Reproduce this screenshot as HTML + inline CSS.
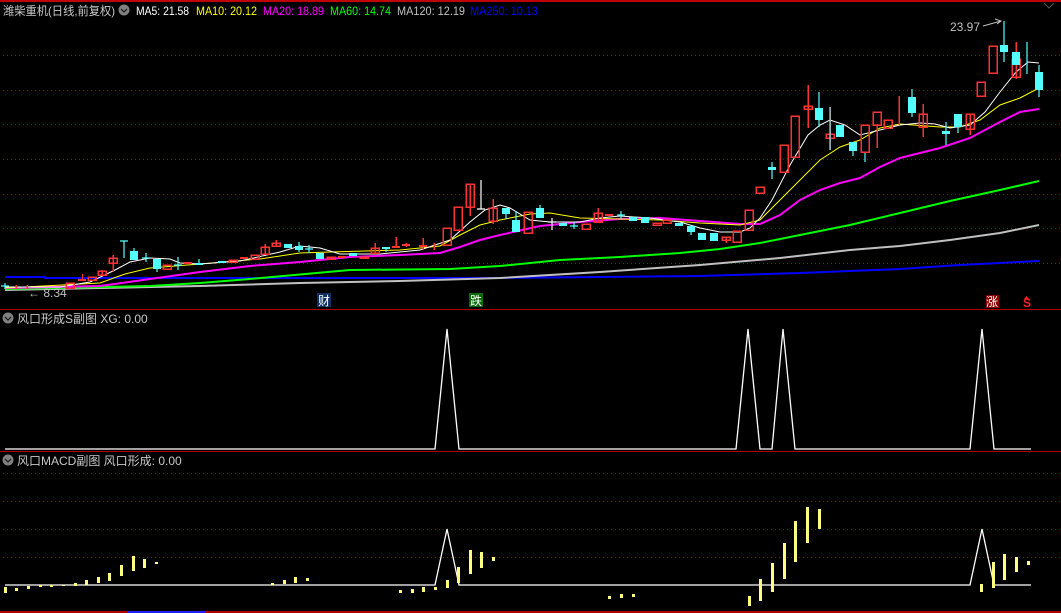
<!DOCTYPE html>
<html><head><meta charset="utf-8"><style>
html,body{margin:0;padding:0;background:#000;width:1061px;height:613px;overflow:hidden}
svg{display:block}
text{font-family:"Liberation Sans","Noto Sans CJK SC",sans-serif;font-size:12px}
</style></head><body>
<svg width="1061" height="613" viewBox="0 0 1061 613" xmlns="http://www.w3.org/2000/svg">
<rect x="0" y="0" width="1061" height="2" fill="#c00000"/>
<!-- header -->
<text x="3" y="15" fill="#c8c8c8" textLength="112" lengthAdjust="spacingAndGlyphs">潍柴重机(日线,前复权)</text>
<circle cx="124" cy="10" r="5.5" fill="#808080"/><path d="M121 9l3 3 3-3" stroke="#222" stroke-width="1.3" fill="none"/>
<text x="136" y="15" fill="#ffffff" textLength="53" lengthAdjust="spacingAndGlyphs">MA5: 21.58</text>
<text x="196" y="15" fill="#ffff00" textLength="61" lengthAdjust="spacingAndGlyphs">MA10: 20.12</text>
<text x="263" y="15" fill="#ff00ff" textLength="61" lengthAdjust="spacingAndGlyphs">MA20: 18.89</text>
<text x="330" y="15" fill="#00ff00" textLength="61" lengthAdjust="spacingAndGlyphs">MA60: 14.74</text>
<text x="397" y="15" fill="#c0c0c0" textLength="68" lengthAdjust="spacingAndGlyphs">MA120: 12.19</text>
<text x="470" y="15" fill="#0000ff" textLength="68" lengthAdjust="spacingAndGlyphs">MA250: 10.13</text>
<path d="M1044 3l5 5 5-5" stroke="#555" fill="none"/>
<!-- grid -->
<g stroke="#a00000" stroke-dasharray="1 3" stroke-width="1">
<path d="M3 55.5H1061M3 90.5H1061M3 124.5H1061M3 159.5H1061M3 194.5H1061M3 228.5H1061M3 263.5H1061"/>
<path d="M3 473.5H1061M3 501.5H1061M3 529.5H1061M3 557.5H1061"/>
</g>
<rect x="0" y="309" width="1061" height="1" fill="#b00000"/>
<rect x="0" y="451" width="1061" height="1" fill="#b00000"/>
<rect x="0" y="611" width="1061" height="2" fill="#b00000"/>
<rect x="127" y="611" width="78" height="2" fill="#2020ff"/>
<!-- MA lines -->
<g fill="none" stroke-width="1">
<polyline stroke="#0000ff" stroke-width="2" points="5,277 45,277 45,278 500,278 700,276 800,273 900,269 960,265 1039,261"/>
<polyline stroke="#c0c0c0" stroke-width="2" points="5,290 100,288 200,286 300,283 400,281 500,278 600,272 700,265 780,258 850,250 900,246 950,240 1000,233 1039,225"/>
<polyline stroke="#00ff00" stroke-width="2" points="5,289 150,286 200,283 250,279 350,270 450,269 500,266 560,260 620,257 680,253 720,249 760,243 800,235 850,225 900,213 950,201 1000,190 1039,181"/>
<polyline stroke="#ff00ff" stroke-width="2" points="5,288 100,286 150,279 200,272 250,266 300,262 350,257 400,255 440,253 460,247 480,240 500,235 540,226 580,222 620,219 660,218 700,221 740,224 760,224 780,215 800,200 820,190 840,183 860,178 880,167 900,158 940,148 970,138 1000,122 1020,112 1039,109"/>
<polyline stroke="#ffff00" points="5,288 100,283 125,274 150,268 200,264 260,259 300,253 330,252 400,250 440,246 460,235 480,225 500,220 530,214 550,213 580,218 620,219 660,220 700,223 740,225 760,220 780,200 800,180 820,160 840,147 860,140 880,128 900,124 940,127 960,127 980,120 1000,105 1020,98 1039,88"/>
<polyline stroke="#ffffff" points="5,287 60,287 90,282 115,270 130,262 150,258 170,259 180,263 200,264 240,261 280,252 300,246 320,248 340,254 380,254 420,250 450,240 470,222 485,210 500,205 510,208 530,220 550,222 580,222 600,218 620,216 650,218 680,222 700,228 720,232 740,232 750,228 760,218 772,200 790,165 808,135 820,125 830,120 845,125 860,135 880,130 900,125 920,123 935,124 950,128 970,125 985,112 1000,92 1016,72 1028,62 1039,63"/>
</g>
<!-- candles: red hollow -->
<g stroke="#ff3232" fill="none" stroke-width="1.5" shape-rendering="crispEdges">
<path d="M16 285v4M27 285v4M102 270v6M113 255v17M265 244v10M276 240v6M375 243v10M396 237v10M406 243v4M423 238v12M434 243v7M470 184v32M493 199v25M598 208v14M726 237v6M808 85v43M830 107v43M877 124v24M899 96v29M923 104v33M970 114v21M1016 42v37"/>
<rect x="66" y="283" width="8" height="5"/><rect x="88" y="277" width="8" height="3"/><rect x="98" y="271" width="8" height="4"/>
<rect x="109" y="258" width="8" height="5"/><rect x="163" y="265" width="8" height="4"/><rect x="229" y="260" width="8" height="2"/><rect x="251" y="255" width="8" height="4"/><rect x="261" y="247" width="8" height="7"/><rect x="272" y="243" width="8" height="3"/><rect x="327" y="257" width="8" height="2"/><rect x="360" y="257" width="8" height="1"/><rect x="371" y="248" width="8" height="5"/>
<rect x="443" y="228" width="8" height="17"/><rect x="454" y="207" width="8" height="23"/><rect x="466" y="184" width="8" height="23"/><rect x="489" y="208" width="8" height="13"/><rect x="524" y="212" width="8" height="21"/><rect x="582" y="224" width="8" height="5"/><rect x="594" y="213" width="8" height="9"/><rect x="653" y="223" width="8" height="2"/><rect x="663" y="220" width="8" height="3"/><rect x="722" y="237" width="8" height="3"/><rect x="733" y="231" width="8" height="11"/><rect x="745" y="210" width="8" height="20"/><rect x="756" y="187" width="8" height="6"/>
<rect x="780" y="145" width="8" height="27"/><rect x="791" y="116" width="8" height="41"/><rect x="804" y="106" width="8" height="3"/><rect x="826" y="134" width="8" height="4"/><rect x="861" y="125" width="8" height="27"/><rect x="873" y="112" width="8" height="13"/><rect x="884" y="120" width="8" height="8"/><rect x="919" y="114" width="8" height="13"/><rect x="966" y="114" width="8" height="15"/><rect x="977" y="82" width="8" height="14"/><rect x="989" y="46" width="8" height="27"/><rect x="1012" y="59" width="8" height="18"/>
</g>
<g fill="#ff3232"><rect x="78" y="279" width="8" height="2"/><rect x="184" y="262" width="8" height="2"/><rect x="240" y="257" width="8" height="2"/><rect x="338" y="256" width="8" height="2"/><rect x="392" y="246" width="8" height="2"/><rect x="402" y="244" width="8" height="2"/><rect x="419" y="245" width="8" height="2"/><rect x="605" y="214" width="8" height="2"/><rect x="82" y="274" width="1" height="5"/></g>
<!-- cyan -->
<g stroke="#54ffff" stroke-width="1.2"><path d="M1 286h8M5 283v6M124 241v17M120 241h8M134 248v4M146 253v9M142 258h8M157 268v4M178 257v13M174 265h8M199 259v6M309 245v8M305 249h8M299 242v10M386 247v5M506 214v5M516 211v9M540 205v4M574 222v7M570 226h8M621 211v8M617 215h8M691 232v3M772 162v17M819 92v35M830 107v43M853 150v6M865 153v9M912 89v28M946 122v23M958 120v13M954 125h8M1004 21v41M1027 42v32M1039 65v32"/></g>
<g fill="#54ffff"><rect x="130" y="251" width="8" height="9"/><rect x="153" y="259" width="8" height="10"/><rect x="195" y="263" width="8" height="2"/><rect x="218" y="261" width="8" height="2"/><rect x="284" y="244" width="8" height="4"/><rect x="295" y="246" width="8" height="4"/><rect x="316" y="253" width="8" height="6"/><rect x="349" y="253" width="8" height="3"/><rect x="382" y="247" width="8" height="2"/><rect x="502" y="208" width="8" height="6"/><rect x="512" y="220" width="8" height="12"/><rect x="536" y="208" width="8" height="10"/><rect x="559" y="223" width="8" height="3"/><rect x="629" y="217" width="8" height="4"/><rect x="641" y="217" width="8" height="6"/><rect x="675" y="223" width="8" height="3"/><rect x="687" y="226" width="8" height="6"/><rect x="698" y="233" width="8" height="7"/><rect x="710" y="233" width="8" height="8"/><rect x="768" y="167" width="8" height="3"/><rect x="815" y="108" width="8" height="12"/><rect x="836" y="125" width="8" height="12"/><rect x="849" y="142" width="8" height="9"/><rect x="908" y="97" width="8" height="16"/><rect x="942" y="131" width="8" height="3"/><rect x="954" y="114" width="8" height="13"/><rect x="1000" y="45" width="8" height="7"/><rect x="1012" y="52" width="8" height="13"/><rect x="1035" y="72" width="8" height="18"/></g>
<g stroke="#fff" stroke-width="1.2"><path d="M481 180v29M477 209h8M552 218v12M548 222h8"/></g>
<!-- labels -->
<text x="28" y="297" fill="#c0c0c0">← 8.34</text>
<text x="950" y="31" fill="#c0c0c0">23.97</text>
<path d="M983 26l18-5M995 19l6 2-4 3" stroke="#c0c0c0" fill="none"/>
<rect x="317" y="293" width="14" height="14" fill="#103060"/><text x="318" y="305" fill="#fff">财</text>
<rect x="469" y="293" width="14" height="14" fill="#0a6a0a"/><text x="470" y="305" fill="#fff">跌</text>
<rect x="986" y="295" width="13" height="13" fill="#8a0000"/><text x="986" y="306" fill="#fff">涨</text>
<text x="1023" y="307" fill="#ff2020" font-weight="bold">S</text><path d="M1024 299l2.5-3 2.5 3z" fill="#ff2020"/>
<!-- sub panel 1 -->
<circle cx="8" cy="318" r="5.5" fill="#808080"/><path d="M5 317l3 3 3-3" stroke="#222" stroke-width="1.3" fill="none"/>
<text x="17" y="323" fill="#c8c8c8">风口形成S副图  XG: 0.00</text>
<polyline fill="none" stroke="#fff" stroke-width="1.3" points="5,449 435,449 447,329 459,449 736,449 748,329 760,449 772,449 783,329 795,449 970,449 982,329 994,449 1031,449"/>
<!-- sub panel 2 -->
<circle cx="8" cy="460" r="5.5" fill="#808080"/><path d="M5 459l3 3 3-3" stroke="#222" stroke-width="1.3" fill="none"/>
<text x="17" y="465" fill="#c8c8c8">风口MACD副图  风口形成: 0.00</text>
<polyline fill="none" stroke="#fff" stroke-width="1.3" points="5,585 435,585 447,529 459,585 970,585 982,529 994,585 1031,585"/>
<g fill="#ffff80">
<rect x="4" y="587" width="3" height="6"/><rect x="15" y="588" width="3" height="3"/><rect x="27" y="586" width="3" height="3"/><rect x="39" y="585" width="3" height="2"/><rect x="50" y="585" width="3" height="2"/><rect x="62" y="585" width="3" height="1"/><rect x="74" y="583" width="3" height="3"/><rect x="85" y="580" width="3" height="5"/><rect x="97" y="577" width="3" height="6"/><rect x="108" y="573" width="3" height="8"/><rect x="120" y="565" width="3" height="11"/><rect x="132" y="556" width="3" height="15"/><rect x="143" y="559" width="3" height="9"/><rect x="155" y="562" width="3" height="2"/>
<rect x="271" y="583" width="3" height="2"/><rect x="283" y="580" width="3" height="4"/><rect x="294" y="577" width="3" height="6"/><rect x="306" y="578" width="3" height="3"/>
<rect x="399" y="590" width="3" height="3"/><rect x="411" y="589" width="3" height="4"/><rect x="422" y="587" width="3" height="5"/><rect x="434" y="587" width="3" height="3"/><rect x="446" y="580" width="3" height="8"/><rect x="457" y="567" width="3" height="16"/><rect x="469" y="550" width="3" height="24"/><rect x="480" y="552" width="3" height="16"/><rect x="492" y="557" width="3" height="4"/>
<rect x="608" y="596" width="3" height="3"/><rect x="620" y="594" width="3" height="4"/><rect x="632" y="594" width="3" height="3"/>
<rect x="748" y="596" width="3" height="10"/><rect x="759" y="579" width="3" height="22"/><rect x="771" y="563" width="3" height="29"/><rect x="783" y="543" width="3" height="36"/><rect x="794" y="521" width="3" height="41"/><rect x="806" y="507" width="3" height="36"/><rect x="818" y="509" width="3" height="20"/>
<rect x="980" y="584" width="3" height="8"/><rect x="992" y="562" width="3" height="26"/><rect x="1003" y="554" width="3" height="26"/><rect x="1015" y="557" width="3" height="15"/><rect x="1027" y="561" width="3" height="4"/>
</g>
</svg>
</body></html>
